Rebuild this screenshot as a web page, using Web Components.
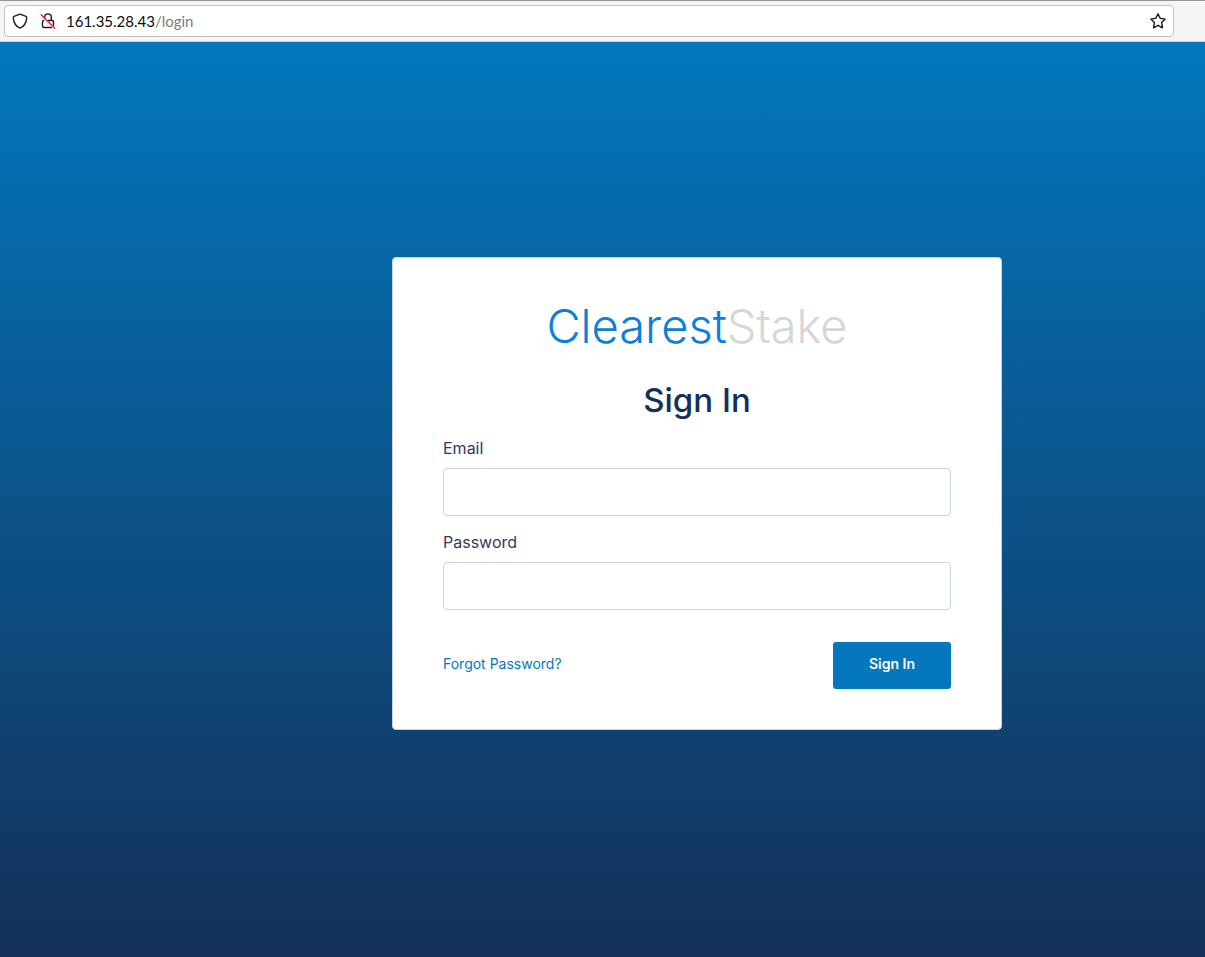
<!DOCTYPE html>
<html lang="en">
<head>
<meta charset="utf-8">
<meta name="viewport" content="width=device-width, initial-scale=1">
<title>ClearestStake</title>
<style>
  html, body { margin: 0; height: 100%; }
  body { font-family: Inter, "Open Sans", sans-serif; color: #33395b; }
</style>
</head>
<body>
<app-shell>
  <address-bar slot="toolbar" host="161.35.28.43" path="/login"></address-bar>
  <login-card>
    <brand-logo slot="logo"></brand-logo>
    <form-field label="Email" type="email"></form-field>
    <form-field label="Password" type="password"></form-field>
  </login-card>
</app-shell>
<script>
class BaseElement extends HTMLElement {
  constructor() {
    super();
    this.attachShadow({ mode: "open" });
  }
  connectedCallback() {
    this.shadowRoot.innerHTML = this.render();
  }
  attr(name) { return this.getAttribute(name) || ""; }
}

customElements.define("app-shell", class extends BaseElement {
  render() {
    return `
      <style>
        :host { display: flex; flex-direction: column; min-height: 100%; }
        main {
          flex: 1; display: grid; align-content: center;
          grid-template-columns: minmax(0, 392fr) minmax(0, 610px) minmax(0, 203fr);
          padding-bottom: 12px;
          background: linear-gradient(#0277bd, #143058);
        }
        ::slotted(login-card) { grid-column: 2; }
      </style>
      <slot name="toolbar"></slot>
      <main><slot></slot></main>`;
  }
});

customElements.define("address-bar", class extends BaseElement {
  render() {
    return `
      <style>
        :host {
          display: block; padding: 4px 31px 4px 4px;
          background: #f6f5f6; border-top: 1px solid #999596; border-bottom: 1px solid #cfcdcd;
        }
        .field {
          display: flex; align-items: center; height: 30px; padding: 0 7px;
          background: #fff; border: 1px solid #c6c3bf; border-radius: 4px;
        }
        svg { display: block; width: 16px; height: 16px; fill: none; stroke: #1c1b22; stroke-width: 1.4; stroke-linejoin: round; stroke-linecap: round; }
        .lock { margin: 0 10px 0 12px; }
        .url { flex: 1; font: 15px/20px Lato, sans-serif; color: #0c0c0d; }
        .path { color: #7c7c7c; }
        button { padding: 0; border: 0; background: none; }
      </style>
      <div class="field">
        <svg viewBox="0 0 16 16" aria-hidden="true"><path d="M8 1.1 L14 3.3 C14.8 3.6 14.8 4.1 14.7 4.9 C14.3 9.8 11.9 13.5 8 15.1 C4.1 13.5 1.7 9.8 1.3 4.9 C1.2 4.1 1.2 3.6 2 3.3 Z"/></svg>
        <svg class="lock" viewBox="0 0 16 16" aria-hidden="true">
          <path d="M4.7 5.2 V4.2 A3.3 3.3 0 0 1 11.3 4.2 V7.4 M8.2 7.5 H12.3 A1.2 1.2 0 0 1 13.5 8.7 V12.2 M3.7 7.5 A1.2 1.2 0 0 0 2.5 8.7 V13 A1.5 1.5 0 0 0 4 14.5 H11.5"/>
          <path d="M1.2 1.8 L14.6 15" stroke="#ff1744"/>
        </svg>
        <div class="url">${this.attr("host")}<span class="path">${this.attr("path")}</span></div>
        <button type="button" aria-label="Bookmark this page">
          <svg viewBox="0 0 16 16"><path d="M8 .9 L10.2 5.3 L15.2 6.1 L11.6 9.6 L12.5 14.8 L8 12.3 L3.5 14.8 L4.4 9.6 L.8 6.1 L5.8 5.3 Z"/></svg>
        </button>
      </div>`;
  }
});

customElements.define("brand-logo", class extends BaseElement {
  render() {
    return `
      <style>
        :host { display: block; text-align: center; font: 300 47px/56px Inter, sans-serif; white-space: nowrap; color: #0a80da; }
        span { color: #d6d6d6; }
      </style>Clearest<span>Stake</span>`;
  }
});

customElements.define("form-field", class extends BaseElement {
  render() {
    return `
      <style>
        :host { display: block; }
        label { display: block; margin-bottom: 8px; font-size: 16px; line-height: 24px; }
        input {
          display: block; box-sizing: border-box; width: 100%; height: 48px; padding: 0 16px;
          font: inherit; color: inherit; background: #fff;
          border: 1px solid #cad5db; border-radius: 4px;
        }
      </style>
      <label for="control">${this.attr("label")}</label>
      <input id="control" type="${this.attr("type")}">`;
  }
});

customElements.define("login-card", class extends BaseElement {
  render() {
    return `
      <style>
        :host {
          display: block; padding: 40px 50px; background: #fff;
          border: 1px solid #cad5db; border-radius: 4px;
        }
        h1 { margin: 26px 0 16px; text-align: center; font-size: 33px; line-height: 40px; font-weight: 500; color: #142f58; }
        .fields { display: grid; gap: 14px; }
        .actions { display: flex; align-items: center; justify-content: space-between; margin-top: 32px; font-size: 14px; }
        a { padding-bottom: 4px; color: #0477bd; text-decoration: none; line-height: 20px; }
        button {
          width: 118px; height: 47px; padding: 0 0 4px; border: 0; border-radius: 3px;
          font: inherit; font-weight: 600; color: #fff; background: #0477bd;
        }
      </style>
      <form>
        <slot name="logo"></slot>
        <h1>Sign In</h1>
        <div class="fields"><slot></slot></div>
        <div class="actions">
          <a href="#forgot">Forgot Password?</a>
          <button type="button">Sign In</button>
        </div>
      </form>`;
  }
});
</script>
</body>
</html>
